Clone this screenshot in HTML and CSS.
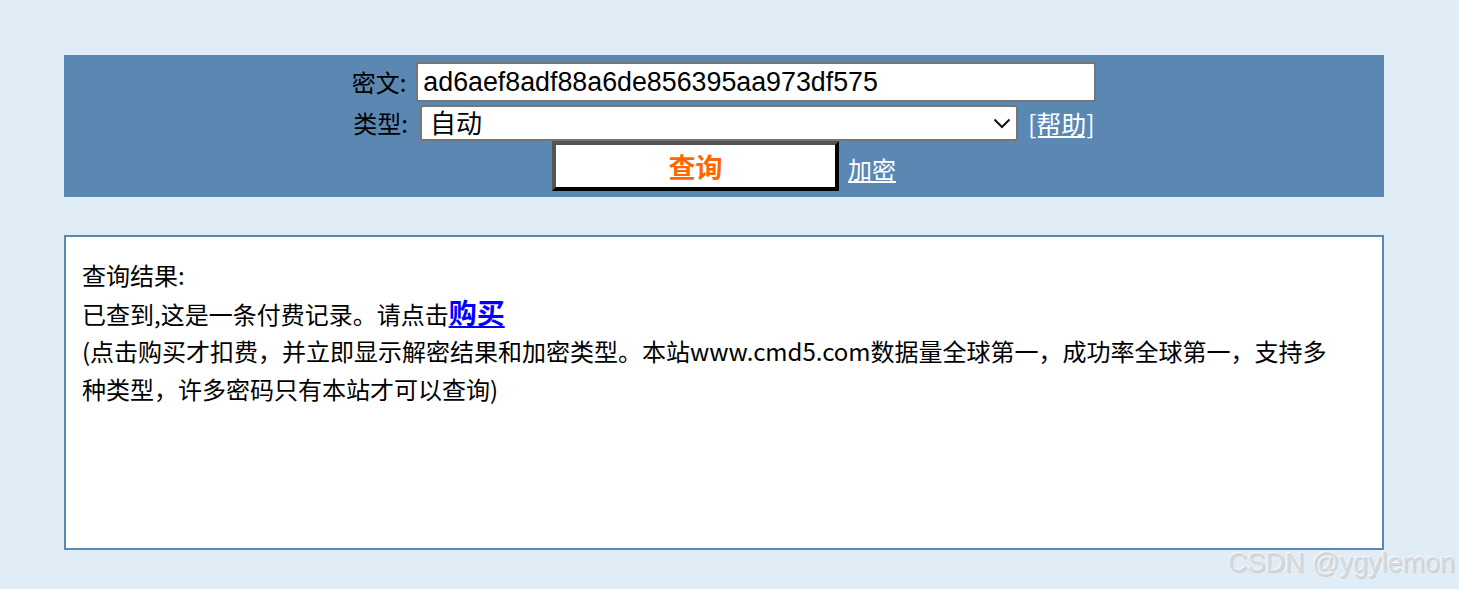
FILE: index.html
```html
<!DOCTYPE html>
<html lang="zh-CN">
<head>
<meta charset="utf-8">
<title>cmd5</title>
<link rel="stylesheet" href="styles.css">
</head>
<body>
<div class="page">
  <form class="band">
    <div class="row">
      <label class="lbl">密文:</label>
      <input class="cipher" type="text" value="ad6aef8adf88a6de856395aa973df575">
    </div>
    <div class="row">
      <label class="lbl">类型:</label>
      <span class="select-wrap">
        <select class="type-select"><option>自动</option></select>
        <svg class="chev" width="18" height="11" viewBox="0 0 18 11"><path d="M1.5 1.5 L9 9 L16.5 1.5" fill="none" stroke="#111" stroke-width="2"/></svg>
      </span>
      <a class="help" href="#">[帮助]</a>
    </div>
    <div class="row row-btn">
      <button class="query" type="button">查询</button>
      <a class="enc" href="#">加密</a>
    </div>
  </form>
  <div class="result">
    <div>查询结果:</div>
    <div>已查到,这是一条付费记录。请点击<a class="buy" href="#">购买</a></div>
    <div>(点击购买才扣费，并立即显示解密结果和加密类型。本站www.cmd5.com数据量全球第一，成功率全球第一，支持多种类型，许多密码只有本站才可以查询)</div>
  </div>
</div>
<div class="watermark">CSDN @ygylemon</div>
</body>
</html>
```
FILE: styles.css
```css
html, body {
  margin: 0;
  padding: 0;
}
body {
  background: #e0edf6;
  font-family: "Microsoft YaHei", "Noto Sans CJK SC", "Noto Sans", sans-serif;
  width: 1459px;
  height: 589px;
  overflow: hidden;
  position: relative;
}
.page {
  padding: 55px 0 0 64px;
  width: 1320px;
}
.band {
  margin: 0;
  background: #5b87b3;
  padding: 7px 0 6px;
  height: 129px;
  display: flex;
  flex-direction: column;
  align-items: center;
}
.row {
  display: flex;
  align-items: center;
  justify-content: center;
}
.lbl {
  font-size: 24px;
  color: #000;
  margin-right: 10px;
  line-height: 1;
}
.cipher {
  box-sizing: border-box;
  width: 680px;
  height: 40px;
  border: 2px solid #767676;
  border-radius: 3px;
  background: #fff;
  font-family: "Liberation Sans", Arial, sans-serif;
  font-size: 26.8px;
  padding: 0 5px;
  color: #000;
  margin: 0;
}
.row + .row {
  margin-top: 3px;
}
.select-wrap {
  position: relative;
  display: inline-block;
  margin-left: 2px;
}
.type-select {
  appearance: none;
  -webkit-appearance: none;
  box-sizing: border-box;
  width: 598px;
  height: 36px;
  border: 2px solid #767676;
  border-radius: 3px;
  background: #fff;
  font-family: "Noto Sans CJK SC", sans-serif;
  font-size: 26px;
  line-height: 30px;
  padding: 0 0 2px 8px;
  color: #000;
  margin: 0;
  display: block;
}
.chev {
  position: absolute;
  right: 7px;
  top: 13px;
  pointer-events: none;
}
.help {
  margin-left: 10px;
  color: #fff;
  font-size: 25px;
  line-height: 1;
}
.row + .row-btn {
  margin-top: 0;
}
.query {
  box-sizing: border-box;
  width: 287px;
  height: 50px;
  background: #fff;
  border-style: solid;
  border-width: 4px;
  border-color: #545454 #000 #000 #545454;
  color: #ff6600;
  font-family: "Noto Sans CJK SC", sans-serif;
  font-weight: bold;
  font-size: 27px;
  padding: 0;
  margin: 0;
  line-height: 1;
}
.enc {
  margin-left: 9px;
  margin-top: 6px;
  color: #fff;
  font-size: 24px;
  line-height: 1;
}
.result {
  margin-top: 38px;
  box-sizing: border-box;
  height: 315px;
  background: #fff;
  border: 2px solid #5b87b3;
  padding: 19px 40px 0 16px;
  font-size: 24px;
  line-height: 37.5px;
  color: #000;
}
.buy {
  color: #0000ff;
  font-weight: bold;
  font-size: 28px;
}
.watermark {
  position: absolute;
  right: 4px;
  bottom: 10px;
  font-family: "Liberation Sans", Arial, sans-serif;
  font-size: 27px;
  color: #d6dadd;
  text-shadow: -1px -1px 0 #f6f9fb, 1px 1px 0 #cbcfd3;
}
```
